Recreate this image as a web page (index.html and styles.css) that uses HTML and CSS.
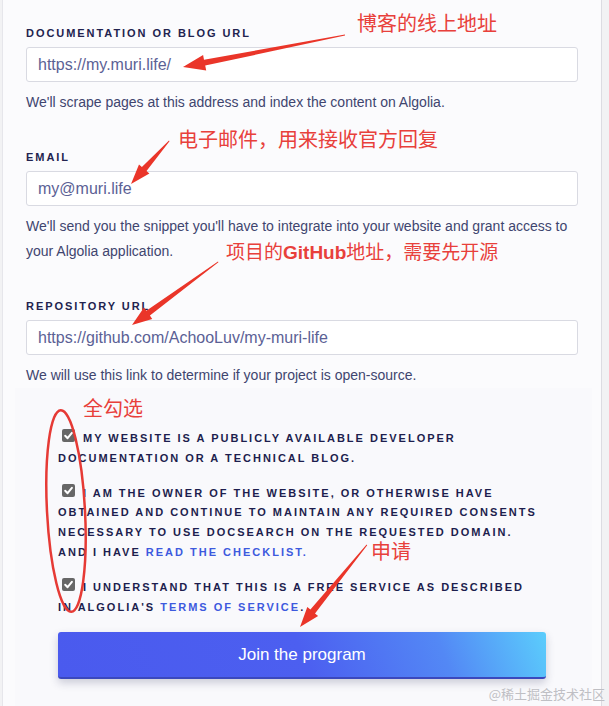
FILE: index.html
```html
<!DOCTYPE html>
<html lang="en">
<head>
<meta charset="utf-8">
<title>Join DocSearch</title>
<link rel="stylesheet" href="styles.css">
</head>
<body>
<div class="page">
  <div class="card">
    <form class="form">
      <div class="field">
        <label class="label">DOCUMENTATION OR BLOG URL</label>
        <div class="input">https://my.muri.life/</div>
        <p class="help">We'll scrape pages at this address and index the content on Algolia.</p>
      </div>
      <div class="field">
        <label class="label">EMAIL</label>
        <div class="input">my@muri.life</div>
        <p class="help">We'll send you the snippet you'll have to integrate into your website and grant access to your Algolia application.</p>
      </div>
      <div class="field">
        <label class="label">REPOSITORY URL</label>
        <div class="input">https://github.com/AchooLuv/my-muri-life</div>
        <p class="help">We will use this link to determine if your project is open-source.</p>
      </div>
      <div class="consent">
        <p class="check-item"><span class="checkbox"><svg viewBox="0 0 13 13" width="13" height="13"><path d="M3.2 6.8 L5.6 9.2 L9.9 3.8" fill="none" stroke="#fff" stroke-width="2" stroke-linecap="round" stroke-linejoin="round"/></svg></span>MY WEBSITE IS A PUBLICLY AVAILABLE DEVELOPER<br>DOCUMENTATION OR A TECHNICAL BLOG.</p>
        <p class="check-item"><span class="checkbox"><svg viewBox="0 0 13 13" width="13" height="13"><path d="M3.2 6.8 L5.6 9.2 L9.9 3.8" fill="none" stroke="#fff" stroke-width="2" stroke-linecap="round" stroke-linejoin="round"/></svg></span>I AM THE OWNER OF THE WEBSITE, OR OTHERWISE HAVE<br>OBTAINED AND CONTINUE TO MAINTAIN ANY REQUIRED CONSENTS<br>NECESSARY TO USE DOCSEARCH ON THE REQUESTED DOMAIN.<br>AND I HAVE <a class="link">READ THE CHECKLIST.</a></p>
        <p class="check-item"><span class="checkbox"><svg viewBox="0 0 13 13" width="13" height="13"><path d="M3.2 6.8 L5.6 9.2 L9.9 3.8" fill="none" stroke="#fff" stroke-width="2" stroke-linecap="round" stroke-linejoin="round"/></svg></span>I UNDERSTAND THAT THIS IS A FREE SERVICE AS DESCRIBED<br>IN ALGOLIA'S <a class="link">TERMS OF SERVICE</a>.</p>
        <button type="button" class="cta">Join the program</button>
      </div>
    </form>
  </div>

  <svg class="marks" width="609" height="706" viewBox="0 0 609 706">
    <polygon points="345,34.5 345,35.5 205.2,65.6 206.2,70.5 183,67 203.1,54.9 204,59.8" />
    <polygon points="169,140.5 169.5,141.2 146.5,171 149.4,173.6 131,184 139,164.4 141.9,167" />
    <polygon points="218,261.5 218.4,262.3 149.9,315.6 152.2,318.9 132,325 144,307.6 146.3,310.8" />
    <polygon points="366.6,544.5 367.2,545.2 315,613.4 318.1,615.9 300,627 307.3,607.1 310.4,609.6" />
    <ellipse cx="66" cy="511" rx="19" ry="101" transform="rotate(-3 66 511)" />
  </svg>
  <div class="note note-blog">博客的线上地址</div>
  <div class="note note-email">电子邮件，用来接收官方回复</div>
  <div class="note note-repo">项目的<b class="latin">GitHub</b>地址，需要先开源</div>
  <div class="note note-check">全勾选</div>
  <div class="note note-apply">申请</div>
  <div class="watermark">@稀土掘金技术社区</div>
</div>
</body>
</html>
```

FILE: styles.css
```css
html, body {
  margin: 0;
  padding: 0;
}

body {
  background: #f2f2f4;
  font-family: "Liberation Sans", Arial, sans-serif;
  overflow: hidden;
}

.page {
  position: relative;
  width: 609px;
  height: 706px;
  overflow: hidden;
}

.card {
  box-sizing: border-box;
  width: 600px;
  height: 706px;
  margin-left: 2px;
  padding: 26px 23px 0;
  background: #fbfbfd;
  border-left: 1px solid #e6e6eb;
  border-right: 1px solid #dcdce2;
}

.form {
  margin: 0;
}

.field {
  margin-bottom: 35px;
}

.field:nth-child(3) {
  margin-bottom: 0;
}

.label {
  display: block;
  margin-bottom: 6px;
  font-size: 11px;
  line-height: 15px;
  font-weight: 700;
  letter-spacing: 1.95px;
  color: #22234f;
}

.input {
  box-sizing: border-box;
  height: 35px;
  padding: 0 11px;
  border: 1px solid #d9dae2;
  border-radius: 3px;
  background: #ffffff;
  font-size: 16px;
  line-height: 33px;
  color: #5b6195;
}

.help {
  margin: 8px 0 0;
  font-size: 14px;
  line-height: 25px;
  color: #40456f;
}

.consent {
  margin: 0 -14px 0 -11px;
  padding: 41px 46px 0 43px;
  background: #f9f9fc;
  height: 330px;
}

.check-item {
  margin: 0 0 15px;
  font-size: 11px;
  line-height: 19.8px;
  font-weight: 700;
  letter-spacing: 2px;
  color: #1d1e4e;
  white-space: nowrap;
}

.checkbox {
  display: inline-block;
  width: 13px;
  height: 13px;
  margin: 0 8px 0 4px;
  border-radius: 2px;
  background: #676767;
  vertical-align: baseline;
}

.checkbox svg {
  display: block;
}

.link {
  color: #3d5ade;
  text-decoration: none;
}

.cta {
  display: block;
  box-sizing: border-box;
  width: 100%;
  height: 47px;
  margin-top: 3px;
  border: 0;
  border-bottom: 2px solid #3b48bd;
  border-radius: 3px;
  background: linear-gradient(68deg, #4a5aee 0%, #4c5ff0 50%, #5388f5 78%, #5bcdfc 100%);
  box-shadow: 0 4px 9px rgba(40, 45, 90, 0.22);
  color: #ffffff;
  font-family: "Liberation Sans", Arial, sans-serif;
  font-size: 17px;
  line-height: 45px;
  padding: 0;
}

.marks {
  position: absolute;
  top: 0;
  left: 0;
  pointer-events: none;
}

.marks polygon {
  fill: #ea3529;
}

.marks ellipse {
  fill: none;
  stroke: #e63a35;
  stroke-width: 2.5;
}

.note {
  position: absolute;
  font-family: "Noto Sans CJK SC", sans-serif;
  font-size: 20px;
  line-height: 20px;
  color: #e8403b;
  white-space: nowrap;
}

.note .latin {
  font-family: "Liberation Sans", Arial, sans-serif;
  font-weight: 700;
}

.note-blog {
  left: 357px;
  top: 13px;
}

.note-email {
  left: 178px;
  top: 129px;
}

.note-repo {
  left: 226px;
  top: 241px;
  font-size: 19px;
}

.note-check {
  left: 83px;
  top: 398px;
}

.note-apply {
  left: 371px;
  top: 541px;
}

.watermark {
  position: absolute;
  right: 4px;
  bottom: 4px;
  font-family: "Noto Sans CJK SC", sans-serif;
  font-size: 13px;
  line-height: 16px;
  color: #bfbfc4;
}
```
